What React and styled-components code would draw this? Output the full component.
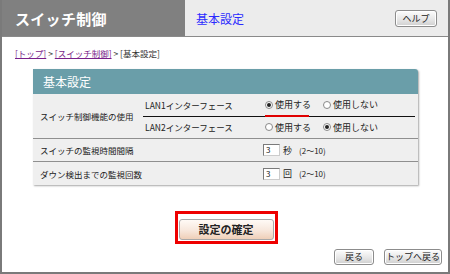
import React from "react";
import styled, { createGlobalStyle } from "styled-components";

const Global = createGlobalStyle`
  html, body { margin: 0; padding: 0; background: #fff; }
  body { font-family: "Noto Sans CJK JP", "Noto Sans", sans-serif; }
  * { box-sizing: border-box; }
`;

const Frame = styled.div`
  width: 450px;
  height: 274px;
  border-left: 2px solid #7a7a7a;
  border-right: 2px solid #7a7a7a;
  border-bottom: 2px solid #7a7a7a;
  display: flex;
  flex-direction: column;
  position: relative;
  overflow: hidden;
`;

const Header = styled.div`
  display: flex;
  height: 37px;
  border-bottom: 1px solid #8a8a8a;
  flex-shrink: 0;
`;

const TitleBlock = styled.div`
  width: 183px;
  background: #808080;
  color: #fff;
  font-weight: bold;
  font-size: 15px;
  display: flex;
  align-items: center;
  padding-left: 13px;
  letter-spacing: 0.3px;
`;

const NavBlock = styled.div`
  flex: 1;
  background: #ececec;
  display: flex;
  align-items: center;
  justify-content: space-between;
  padding: 0 11px 0 11px;
`;

const NavLink = styled.span`
  color: #2b2bff;
  font-size: 12px;
`;

const GrayButton = styled.button`
  font-family: inherit;
  font-size: ${(p) => p.$size || 9}px;
  color: #222;
  height: ${(p) => p.$h || 16}px;
  width: ${(p) => p.$w}px;
  padding: 0;
  border: 1px solid #8c8c8c;
  border-radius: 3px;
  background: linear-gradient(#fdfdfd, #e4e4e4 60%, #cfcfcf);
  box-shadow: inset 0 0 0 1px #fff;
  display: flex;
  align-items: center;
  justify-content: center;
`;

const Content = styled.div`
  flex: 1;
  display: flex;
  flex-direction: column;
`;

const Crumbs = styled.div`
  font-size: 8.5px;
  color: #333;
  padding: 10px 0 0 13px;
  height: 24px;
`;

const CrumbLink = styled.span`
  color: #7a1f8a;
  text-decoration: underline;
`;

const Panel = styled.div`
  margin: 8px 0 0 31px;
  width: 385px;
  background: #efefef;
  border-top-right-radius: 3px;
  box-shadow: 1px 1px 2px rgba(0, 0, 0, 0.35);
`;

const PanelHead = styled.div`
  height: 25px;
  background: #6a9ea9;
  color: #fff;
  font-size: 12px;
  padding-left: 10px;
  display: flex;
  align-items: center;
  border-top-right-radius: 3px;
`;

const Row = styled.div`
  display: flex;
  align-items: center;
  height: ${(p) => p.$h}px;
  border-bottom: ${(p) => (p.$last ? "none" : "1px solid #8f8f8f")};
  font-size: 9px;
  color: #222;
`;

const Label = styled.div`
  width: ${(p) => p.$w}px;
  padding-left: 7px;
  flex-shrink: 0;
  font-size: 8.5px;
`;

const SubRows = styled.div`
  flex: 1;
  display: flex;
  flex-direction: column;
  height: 100%;
`;

const SubRow = styled.div`
  flex: 1;
  display: flex;
  align-items: center;
  border-bottom: ${(p) => (p.$line ? "1px solid #111" : "none")};
  margin-right: 3px;
`;

const SubLabel = styled.div`
  width: 122px;
  padding-left: 2px;
  font-size: 8.5px;
`;

const Option = styled.div`
  display: flex;
  align-items: center;
  gap: 2px;
  width: 58px;
  position: relative;
`;

const Radio = styled.span`
  width: 8px;
  height: 8px;
  border-radius: 50%;
  border: 1px solid #8a8a8a;
  background: #fff;
  display: inline-flex;
  align-items: center;
  justify-content: center;
  &::after {
    content: "";
    width: 4px;
    height: 4px;
    border-radius: 50%;
    background: ${(p) => (p.$on ? "#222" : "transparent")};
  }
`;

const RedLine = styled.span`
  position: absolute;
  left: 0;
  bottom: -6px;
  width: 44px;
  height: 2px;
  background: #e00000;
`;

const NumInput = styled.span`
  width: 17px;
  height: 12px;
  border: 1px solid #7a7a7a;
  border-right-color: #ccc;
  border-bottom-color: #ccc;
  background: #fff;
  font-size: 8px;
  padding-left: 2px;
  line-height: 10px;
  margin-right: 3px;
`;

const Unit = styled.span`
  width: 16px;
`;

const Range = styled.span`
  font-size: 8px;
`;

const ConfirmWrap = styled.div`
  align-self: center;
  margin-top: 26px;
  border: 3px solid #ee0000;
  padding: 1px;
  margin-left: 2px;
`;

const ConfirmButton = styled.button`
  font-family: inherit;
  font-weight: bold;
  font-size: 11px;
  color: #222;
  width: 95px;
  height: 21px;
  border: 1px solid #a8a8a8;
  border-radius: 3px;
  background: linear-gradient(#fffaf6, #f7e7dc 55%, #efcfb8);
  padding: 0;
`;

const Footer = styled.div`
  display: flex;
  justify-content: flex-end;
  gap: 10px;
  padding: 5px 6px 0 0;
`;

export default function App() {
  return (
    <>
      <Global />
      <Frame>
        <Header>
          <TitleBlock>スイッチ制御</TitleBlock>
          <NavBlock>
            <NavLink>基本設定</NavLink>
            <GrayButton $w={42} $h={17}>ヘルプ</GrayButton>
          </NavBlock>
        </Header>
        <Content>
          <Crumbs>
            <CrumbLink>[トップ]</CrumbLink> &gt; <CrumbLink>[スイッチ制御]</CrumbLink> &gt; [基本設定]
          </Crumbs>
          <Panel>
            <PanelHead>基本設定</PanelHead>
            <Row $h={45}>
              <Label $w={110}>スイッチ制御機能の使用</Label>
              <SubRows>
                <SubRow $line>
                  <SubLabel>LAN1インターフェース</SubLabel>
                  <Option>
                    <Radio $on />使用する
                    <RedLine />
                  </Option>
                  <Option>
                    <Radio />使用しない
                  </Option>
                </SubRow>
                <SubRow>
                  <SubLabel>LAN2インターフェース</SubLabel>
                  <Option>
                    <Radio />使用する
                  </Option>
                  <Option>
                    <Radio $on />使用しない
                  </Option>
                </SubRow>
              </SubRows>
            </Row>
            <Row $h={23}>
              <Label $w={230}>スイッチの監視時間間隔</Label>
              <NumInput>3</NumInput>
              <Unit>秒</Unit>
              <Range>(2〜10)</Range>
            </Row>
            <Row $h={23} $last>
              <Label $w={230}>ダウン検出までの監視回数</Label>
              <NumInput>3</NumInput>
              <Unit>回</Unit>
              <Range>(2〜10)</Range>
            </Row>
          </Panel>
          <ConfirmWrap>
            <ConfirmButton>設定の確定</ConfirmButton>
          </ConfirmWrap>
          <Footer>
            <GrayButton $w={40} $h={16}>戻る</GrayButton>
            <GrayButton $w={58} $h={16}>トップへ戻る</GrayButton>
          </Footer>
        </Content>
      </Frame>
    </>
  );
}
